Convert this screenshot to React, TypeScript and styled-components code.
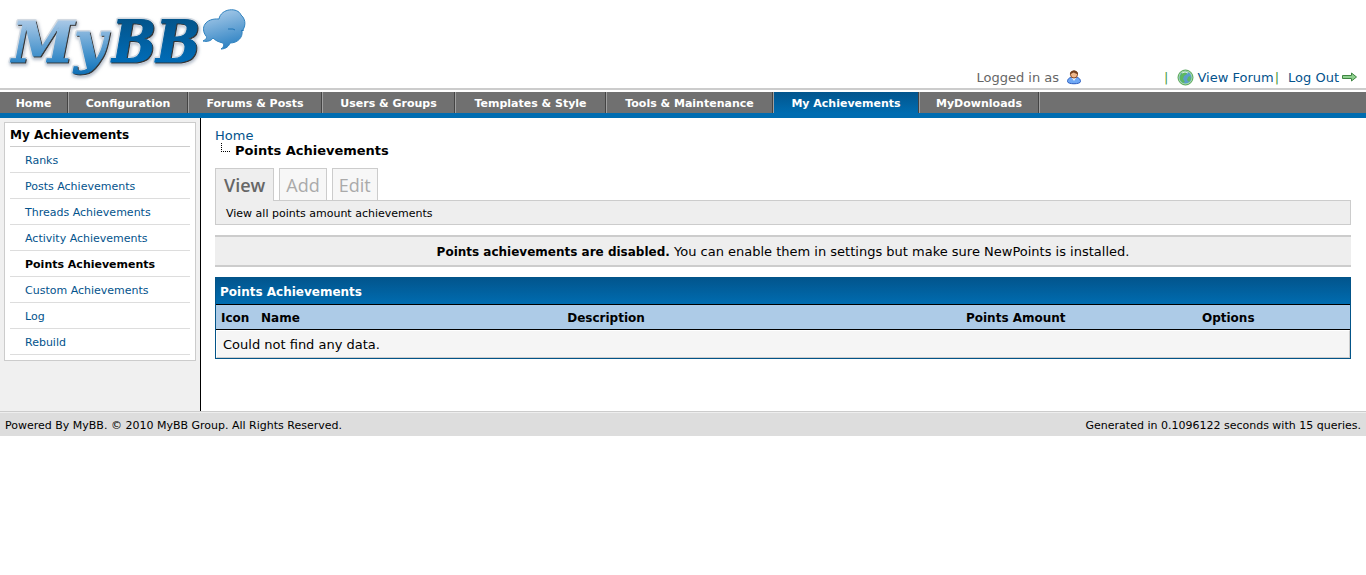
import React from "react";
import styled, { createGlobalStyle, css } from "styled-components";

const sans = `Verdana, "DejaVu Sans", sans-serif`;

const GlobalStyle = createGlobalStyle`
  * { box-sizing: border-box; }
  body { margin: 0; background: #fff; color: #000; font: 13px/15px ${sans}; }
  a { color: #03538c; text-decoration: none; }
  ul { list-style: none; margin: 0; padding: 0; }
`;

const Header = styled.header`
  display: flex;
  justify-content: space-between;
  align-items: flex-end;
  height: 90px;
  padding: 0 9px 2px 0;
  border-bottom: 2px solid #ccc;
`;
const LogoLink = styled.a`
  align-self: flex-start;
  svg { display: block; }
`;
const Welcome = styled.div`
  display: flex;
  align-items: center;
  color: #666;
  height: 18px;
`;
const UserIcon = styled.span`
  display: flex;
  margin: 0 82px 0 7px;
`;
const Bar = styled.span`
  color: #4a9a3c;
`;
const WelcomeLink = styled.a`
  display: flex;
  align-items: center;
  gap: 3px;
  margin: 0 1px 0 9px;
  &:last-child { margin-right: 0; }
`;

const Nav = styled.nav`
  margin-top: 2px;
  background: #707070;
  border-bottom: 5px solid #006cb0;
`;
const NavList = styled.ul`
  display: flex;
  height: 21px;
`;
const NavItem = styled.li<{ $width: number }>`
  width: ${(p) => p.$width}px;
  border-right: 1px solid #a0a0a0;
`;
const NavLink = styled.a<{ $active?: boolean }>`
  display: block;
  height: 21px;
  font: bold 11px/23px ${sans};
  color: #fff;
  text-align: center;
  white-space: nowrap;
  border-right: 1px solid #444;
  ${(p) => p.$active && css`background: linear-gradient(#02558d, #006cb0);`}
`;

const Page = styled.div`
  display: flex;
  min-height: 293px;
`;
const Sidebar = styled.aside`
  flex: 0 0 201px;
  padding: 4px;
  background: #f0f0f0;
  border-right: 1px solid #000;
`;
const Menu = styled.section`
  padding: 0 5px 5px;
  background: #fff;
  border: 1px solid #ccc;
`;
const MenuTitle = styled.h2`
  margin: 0;
  height: 24px;
  font: bold 12px/24px ${sans};
  border-bottom: 1px solid #ccc;
`;
const MenuLink = styled.a<{ $active?: boolean }>`
  display: block;
  height: 26px;
  padding-left: 15px;
  font-size: 11px;
  line-height: 28px;
  border-bottom: 1px solid #ddd;
  ${(p) => p.$active && css`color: #000; font-weight: bold;`}
`;

const Content = styled.main`
  flex: 1;
  min-width: 0;
  padding: 10px 15px 50px 14px;
`;
const Crumbs = styled.nav`
  height: 40px;
`;
const Current = styled.div`
  display: flex;
  gap: 5px;
  padding-left: 6px;
  font-weight: bold;
`;
const Elbow = styled.span`
  width: 9px;
  height: 9px;
  border: dotted #000;
  border-width: 0 0 1px 1px;
`;
const Tabs = styled.ul`
  display: flex;
  gap: 5px;
`;
const TabLink = styled.a<{ $active?: boolean }>`
  display: block;
  height: 32px;
  padding: 0 6px;
  font: 18px/32px "Trebuchet MS", "Open Sans", sans-serif;
  color: #aaa;
  background: #f7f7f7;
  border: 1px solid #ccc;
  border-bottom: 0;
  ${(p) => p.$active && css`
    position: relative;
    height: 33px;
    margin-bottom: -1px;
    padding: 0 8px;
    color: #666;
    font-weight: 600;
    background: #eee;
  `}
`;
const TabNote = styled.div`
  height: 25px;
  padding-left: 10px;
  font-size: 11px;
  line-height: 25px;
  background: #eee;
  border: 1px solid #ccc;
`;
const Alert = styled.p`
  margin: 10px 0;
  height: 32px;
  line-height: 30px;
  text-align: center;
  background: #eee;
  border: solid #ccc;
  border-width: 2px 0;
  strong { font-size: 12px; }
`;
const Table = styled.table`
  width: 100%;
  table-layout: fixed;
  border-collapse: separate;
  border-spacing: 0;
  border: 1px solid #035488;
`;
const TitleCell = styled.th`
  height: 27px;
  padding: 2px 5px 0 4px;
  color: #fff;
  font-size: 12px;
  text-align: left;
  background: linear-gradient(#02558d, #006cb0);
  border-bottom: 1px solid #000;
`;
const HeadCell = styled.th<{ $center?: boolean }>`
  height: 25px;
  padding: 2px 5px 0;
  font-size: 12px;
  text-align: ${(p) => (p.$center ? "center" : "left")};
  background: #adcbe7;
  border-bottom: 1px solid #000;
`;
const DataCell = styled.td`
  height: 28px;
  padding: 0 6px;
  background: #f5f5f5;
  border: 1px solid;
  border-color: #fff #ccc #ccc #fff;
`;
const Footer = styled.footer`
  display: flex;
  justify-content: space-between;
  height: 25px;
  padding: 0 5px;
  font-size: 11px;
  line-height: 28px;
  background: #ddd;
  border-top: 1px solid #ccc;
  box-shadow: inset 0 1px #eee;
`;

const LogoWord = ({ my, bb, dx = 0, dy = 0 }: { my: string; bb: string; dx?: number; dy?: number }) => (
  <>
    <text x={12 + dx} y={62 + dy} fontFamily="'DejaVu Serif', serif" fontSize="56" fill={my}>My</text>
    <text x={112 + dx} y={62 + dy} fontFamily="'DejaVu Serif Condensed', 'DejaVu Serif', serif" fontSize="58" fill={bb}>BB</text>
  </>
);

const Logo = () => (
  <svg width="250" height="86" viewBox="0 0 250 86" role="img" aria-label="MyBB">
    <defs>
      <linearGradient id="light" gradientUnits="userSpaceOnUse" x1="0" y1="18" x2="0" y2="76">
        <stop offset="0" stopColor="#b0cce8" />
        <stop offset="0.75" stopColor="#3187c6" />
        <stop offset="1" stopColor="#0a6cb3" />
      </linearGradient>
      <linearGradient id="dark" gradientUnits="userSpaceOnUse" x1="0" y1="18" x2="0" y2="63">
        <stop offset="0" stopColor="#03548a" />
        <stop offset="1" stopColor="#006cb8" />
      </linearGradient>
      <linearGradient id="bubble" x1="0.3" y1="0" x2="0.6" y2="1">
        <stop offset="0" stopColor="#a9cbe9" />
        <stop offset="1" stopColor="#2a80c2" />
      </linearGradient>
      <filter id="shade" x="-10%" y="-10%" width="120%" height="130%">
        <feDropShadow dx="1" dy="2" stdDeviation="1.5" floodColor="#6c7f99" floodOpacity="0.5" />
      </filter>
    </defs>
    <g fontWeight="bold" fontStyle="italic">
      <g filter="url(#shade)" stroke="#d3dae2" strokeWidth="4" strokeLinejoin="round" aria-hidden="true">
        <LogoWord my="#d3dae2" bb="#d3dae2" />
      </g>
      <g stroke="#333" aria-hidden="true">
        <LogoWord my="#333" bb="#333" dx={1} dy={1} />
      </g>
      <g stroke="url(#light)">
        <text x="12" y="62" fontFamily="'DejaVu Serif', serif" fontSize="56" fill="url(#light)">My</text>
      </g>
      <g stroke="url(#dark)">
        <text x="112" y="62" fontFamily="'DejaVu Serif Condensed', 'DejaVu Serif', serif" fontSize="58" fill="url(#dark)">BB</text>
      </g>
    </g>
    <path d="M219 19C221 8 238 7 241 15C247 20 245 28 242 31C243 37 238 43 230 43C229 46 226 49 221 49C224 47 224 45 223 43C218 42 215 40 213 38C211 41 207 42 203 41C207 39 207 37 206 36C200 28 205 18 219 19Z" fill="url(#bubble)" stroke="#2f82bf" />
    <path d="M228 29h5l2 1M241 31l3-1" fill="none" stroke="#1e74b5" />
  </svg>
);

const Person = () => (
  <svg width="16" height="16" viewBox="0 0 16 16" aria-hidden="true">
    <path d="M1.500 12.500C1.500 9.500 4 8 8 8s6.500 1.500 6.500 4.500c0 3-13 3-13 0z" fill="#6fa8f5" stroke="#2a5cc0" />
    <path d="M6 9l2 3 2-3z" fill="#e8f1ff" />
    <circle cx="8" cy="5.500" r="3.500" fill="#f0b88c" stroke="#8a4a25" />
    <path d="M4 6C3 0 13 0 12 6C11 4 9 5 8 3.500C7 4 5 4 4 6z" fill="#74401f" />
  </svg>
);
const Globe = () => (
  <svg width="17" height="17" viewBox="0 0 17 17" aria-hidden="true">
    <circle cx="8.500" cy="8.500" r="7.500" fill="#a3dba4" stroke="#56a45a" />
    <circle cx="8.500" cy="8.500" r="6" fill="#5b9dcb" />
    <path d="M3 7l2-3 4-1 1 2-3 2-1 3 2 3-2 1-3-3zM11 8l2-1 1 3-2 3-2-2z" fill="#5cb860" />
    <path d="M5 4q3-2 6 0" fill="none" stroke="#d9f0da" />
  </svg>
);
const Arrow = () => (
  <svg width="15" height="10" viewBox="0 0 15 10" aria-hidden="true">
    <path d="M.5 3.500h9v-2.500l5 4-5 4v-2.500h-9z" fill="#8fd08f" stroke="#3f8542" />
  </svg>
);

const sections = [
  { label: "Home", width: 69 },
  { label: "Configuration", width: 120 },
  { label: "Forums & Posts", width: 134 },
  { label: "Users & Groups", width: 133 },
  { label: "Templates & Style", width: 151 },
  { label: "Tools & Maintenance", width: 167 },
  { label: "My Achievements", width: 146 },
  { label: "MyDownloads", width: 120 },
];
const menu = ["Ranks", "Posts Achievements", "Threads Achievements", "Activity Achievements", "Points Achievements", "Custom Achievements", "Log", "Rebuild"];
const tabs = ["View", "Add", "Edit"];

export default function App() {
  return (
    <>
      <GlobalStyle />
      <Header>
        <LogoLink href="#"><Logo /></LogoLink>
        <Welcome>
          Logged in as
          <UserIcon><Person /></UserIcon>
          <Bar>|</Bar>
          <WelcomeLink href="#"><Globe />View Forum</WelcomeLink>
          <Bar>|</Bar>
          <WelcomeLink href="#">Log Out<Arrow /></WelcomeLink>
        </Welcome>
      </Header>
      <Nav>
        <NavList>
          {sections.map((s) => (
            <NavItem key={s.label} $width={s.width}>
              <NavLink href="#" $active={s.label === "My Achievements"}>{s.label}</NavLink>
            </NavItem>
          ))}
        </NavList>
      </Nav>
      <Page>
        <Sidebar>
          <Menu>
            <MenuTitle>My Achievements</MenuTitle>
            <ul>
              {menu.map((m) => <li key={m}><MenuLink href="#" $active={m === "Points Achievements"}>{m}</MenuLink></li>)}
            </ul>
          </Menu>
        </Sidebar>
        <Content>
          <Crumbs>
            <a href="#">Home</a>
            <Current><Elbow />Points Achievements</Current>
          </Crumbs>
          <Tabs>
            {tabs.map((t) => <li key={t}><TabLink href="#" $active={t === "View"}>{t}</TabLink></li>)}
          </Tabs>
          <TabNote>View all points amount achievements</TabNote>
          <Alert><strong>Points achievements are disabled.</strong> You can enable them in settings but make sure NewPoints is installed.</Alert>
          <Table>
            <colgroup>
              <col width="40" />
              <col width="27%" />
              <col width="32%" />
              <col width="16%" />
              <col />
            </colgroup>
            <thead>
              <tr><TitleCell colSpan={5}>Points Achievements</TitleCell></tr>
              <tr>
                <HeadCell>Icon</HeadCell>
                <HeadCell>Name</HeadCell>
                <HeadCell>Description</HeadCell>
                <HeadCell $center>Points Amount</HeadCell>
                <HeadCell $center>Options</HeadCell>
              </tr>
            </thead>
            <tbody>
              <tr><DataCell colSpan={5}>Could not find any data.</DataCell></tr>
            </tbody>
          </Table>
        </Content>
      </Page>
      <Footer>
        <span>Powered By MyBB. © 2010 MyBB Group. All Rights Reserved.</span>
        <span>Generated in 0.1096122 seconds with 15 queries.</span>
      </Footer>
    </>
  );
}
